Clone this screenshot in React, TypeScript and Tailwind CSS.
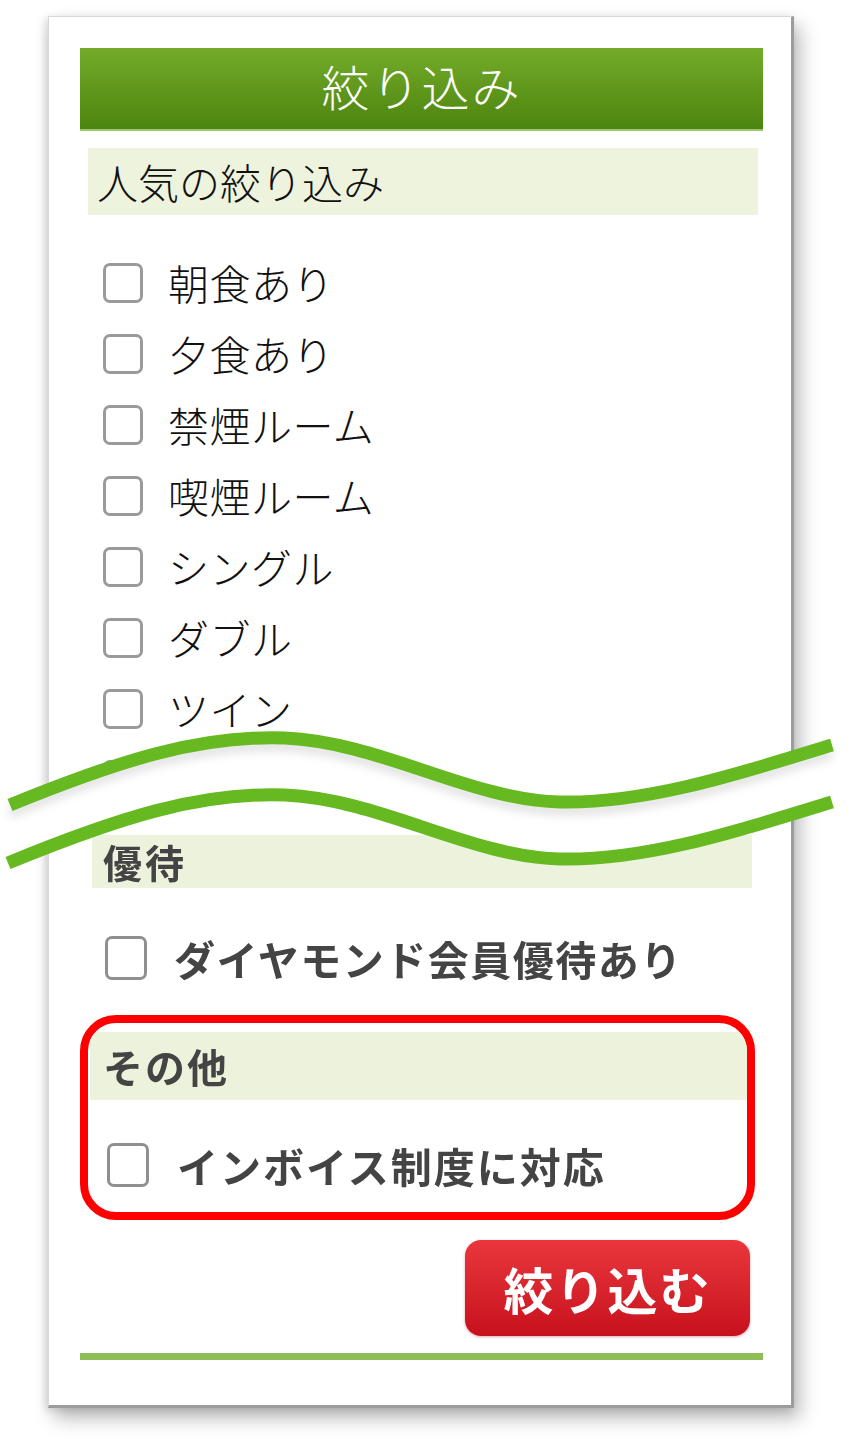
import React from 'react';

const popular = ["朝食あり", "夕食あり", "禁煙ルーム", "喫煙ルーム", "シングル", "ダブル", "ツイン", "トリプル"];

const jp = { fontFamily: '"Noto Sans CJK JP", "Noto Sans", sans-serif' };

function Box({ big }: { big?: boolean }) {
  return (
    <span
      className={
        big
          ? "w-[42px] h-[44px] shrink-0 rounded-[7px] border-[3px] border-[#8f8f8f] bg-white blur-[0.6px]"
          : "w-[40px] h-[40px] shrink-0 rounded-[7px] border-[3px] border-[#9a9a9a] bg-white"
      }
    />
  );
}

// the "break" drawn across the screenshot
function Break() {
  const a = "M10 85 C120 40 200 15 285 18 C380 22 470 80 560 82 C650 84 750 50 832 25";
  const b = "M8 143 C120 97 200 72 285 75 C380 79 470 137 560 139 C650 141 750 107 832 82";
  const band =
    a + " L832 82 C750 107 650 141 560 139 C470 137 380 79 285 75 C200 72 120 97 8 143 Z";
  return (
    <svg className="absolute left-0 top-[720px]" width="864" height="170" viewBox="0 0 864 170">
      <defs>
        <filter id="sh" x="-10%" y="-50%" width="120%" height="200%">
          <feGaussianBlur stdDeviation="5" />
        </filter>
      </defs>
      <path d={band} fill="#ffffff" />
      <path d={a} transform="translate(0 8)" fill="none" stroke="rgba(0,0,0,0.12)" strokeWidth="10" filter="url(#sh)" />
      <path d={a} fill="none" stroke="#66b921" strokeWidth="13" />
      <path d={b} fill="none" stroke="#66b921" strokeWidth="13" />
    </svg>
  );
}

export default function App() {
  return (
    <div className="relative w-[864px] h-[1439px] bg-white overflow-hidden" style={jp}>
      <div className="pt-[16px] pl-[48px]">
        <div className="w-[746px] h-[1392px] flex flex-col bg-white border border-[#d9d9d9] border-r-[3px] border-r-[#9c9c9c] border-b-[3px] border-b-[#9c9c9c] shadow-[6px_10px_18px_rgba(0,0,0,0.28),-3px_2px_8px_rgba(0,0,0,0.12)]">
          {/* title bar */}
          <div className="mt-[31px] ml-[31px] mr-[28px] h-[83px] pb-[8px] flex items-center justify-center bg-gradient-to-b from-[#74ab29] to-[#4c850e] border-b-2 border-b-[#9fc46e]">
            <span className="text-white text-[48px] leading-none font-light tracking-[2px]">絞り込み</span>
          </div>

          {/* popular */}
          <div className="mt-[17px] ml-[39px] mr-[33px] h-[67px] flex items-center pl-[9px] bg-[#eef3dd]">
            <span className="text-[41px] leading-none font-light text-[#111]">人気の絞り込み</span>
          </div>
          <div className="mt-[32px] pl-[54px] flex flex-col">
            {popular.map((label) => (
              <div key={label} className="h-[71px] flex items-center gap-[25px]">
                <Box />
                <span className="text-[41px] leading-none font-light text-[#111] tracking-[0.5px]">{label}</span>
              </div>
            ))}
          </div>

          {/* lower part (zoomed screenshot) */}
          <div className="mt-[20px] ml-[43px] mr-[39px] h-[53px] flex items-center pl-[11px] bg-[#edf2dd]">
            <span className="text-[39px] leading-none font-bold text-[#444] tracking-[3px] blur-[0.6px]">優待</span>
          </div>
          <div className="mt-[40px] pl-[56px] h-[60px] flex items-center gap-[27px]">
            <Box big />
            <span className="text-[41px] leading-none font-bold text-[#444] tracking-[1.5px] blur-[0.6px]">ダイヤモンド会員優待あり</span>
          </div>

          <div className="mt-[27px] ml-[31px] mr-[36px] border-[8px] border-[#ff0000] rounded-[36px] overflow-hidden pt-[9px] pb-[17px] flex flex-col">
            <div className="ml-[2px] h-[68px] flex items-center pl-[13px] bg-[#edf2dd]">
              <span className="text-[40px] leading-none font-bold text-[#444] tracking-[2px] blur-[0.6px]">その他</span>
            </div>
            <div className="mt-[35px] pl-[19px] h-[60px] flex items-center gap-[28px]">
              <Box big />
              <span className="text-[41px] leading-none font-bold text-[#444] tracking-[2px] blur-[0.6px]">インボイス制度に対応</span>
            </div>
          </div>

          <div className="mt-[20px] mr-[41px] self-end w-[285px] h-[96px] rounded-[16px] bg-gradient-to-b from-[#ea353c] to-[#c70f1d] flex items-center justify-center shadow-[0_1px_3px_rgba(160,0,0,0.35)]">
            <span className="text-white text-[50px] leading-none font-bold tracking-[2px] blur-[0.5px]">絞り込む</span>
          </div>

          <div className="mt-[17px] ml-[31px] mr-[28px] h-[7px] bg-[#8dbd55]" />
        </div>
      </div>
      <Break />
    </div>
  );
}
